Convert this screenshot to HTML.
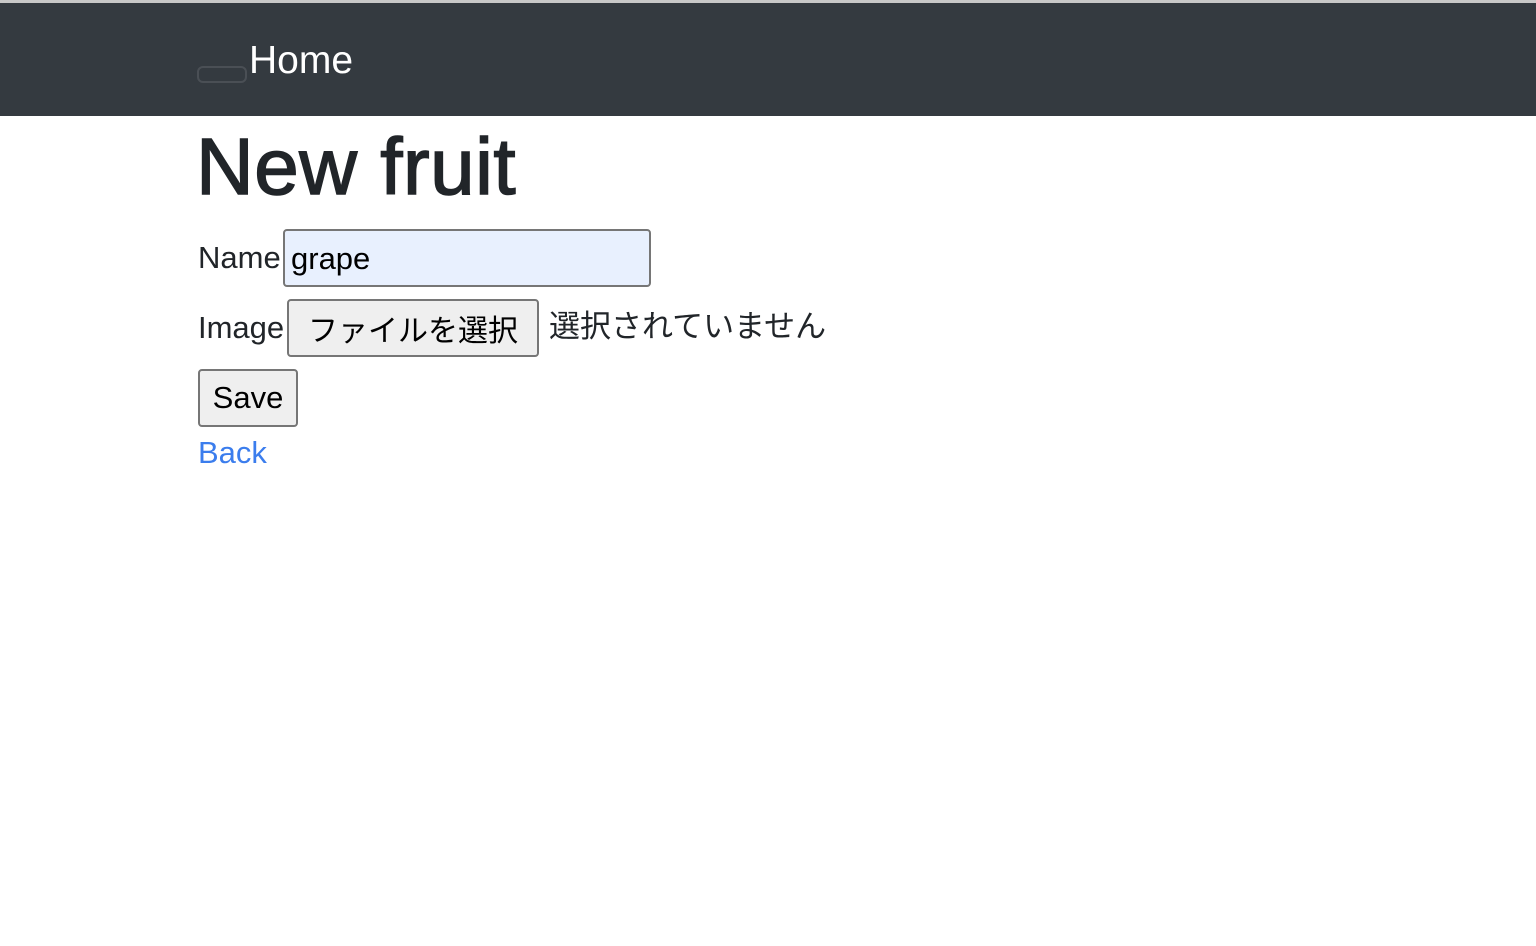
<!DOCTYPE html>
<html><head><meta charset="utf-8"><style>
body{margin:0;width:1536px;height:946px;background:#fff;font-family:"Liberation Sans","Noto Sans CJK JP",sans-serif;color:#212529;position:relative;overflow:hidden}
.a{position:absolute;white-space:nowrap}
.top{position:absolute;left:0;top:0;width:1536px;height:3px;background:#c8c8c8}
.nav{position:absolute;left:0;top:3px;width:1536px;height:113px;background:#343a40}
.tog{position:absolute;left:197px;top:66px;width:50px;height:17px;border:2px solid #4a4f55;border-radius:6px;box-sizing:border-box}
.btn{position:absolute;background:#efefef;border:2px solid #767676;border-radius:4px;box-sizing:border-box;color:#000;font-size:30px;display:flex;align-items:center;justify-content:center}
</style></head><body>
<div class="top"></div>
<div class="nav"></div>
<div class="tog"></div>
<div class="a" style="left:249px;top:39px;font-size:39px;color:#fff;line-height:44px">Home</div>
<div class="a" style="left:196px;top:122px;font-size:80px;line-height:90px;letter-spacing:0.5px;-webkit-text-stroke:1.5px #212529">New fruit</div>
<div class="a" style="left:198px;top:240px;font-size:31px;line-height:36px">Name</div>
<div class="a" style="left:283px;top:229px;width:368px;height:58px;background:#e8f0fe;border:2px solid #767676;border-radius:4px;box-sizing:border-box"></div>
<div class="a" style="left:291px;top:241px;font-size:31px;line-height:36px;color:#000">grape</div>
<div class="a" style="left:198px;top:310px;font-size:31px;line-height:36px">Image</div>
<div class="btn" style="left:287px;top:299px;width:252px;height:58px;font-size:30px">ファイルを選択</div>
<div class="a" style="left:549px;top:309px;font-size:31px;line-height:36px">選択されていません</div>
<div class="btn" style="left:198px;top:369px;width:100px;height:58px;font-size:31px">Save</div>
<div class="a" style="left:198px;top:435px;font-size:31px;line-height:36px;color:#3b7ded">Back</div>
</body></html>
